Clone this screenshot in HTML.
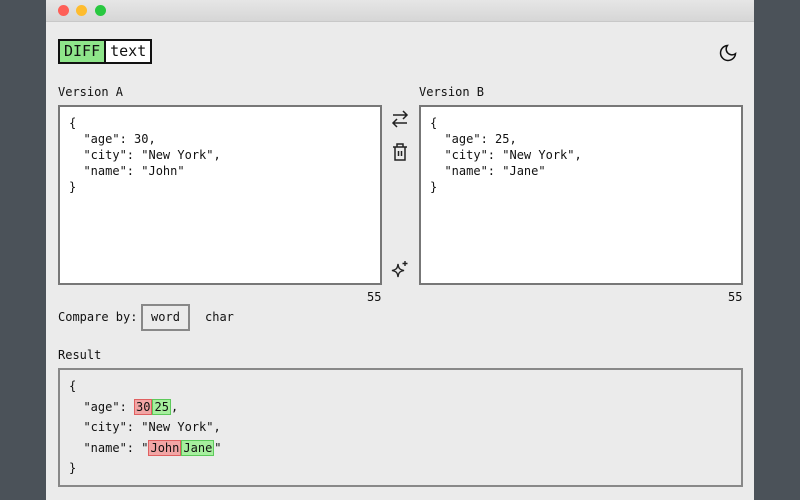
<!DOCTYPE html>
<html><head><style>
*{box-sizing:border-box;margin:0;padding:0}
body{width:800px;height:500px;background:#4b5259;font-family:"DejaVu Sans Mono","Liberation Mono",monospace;font-size:12px;color:#111;position:relative;overflow:hidden}
.win{position:absolute;left:46px;top:0;width:708px;height:500px;background:#ebebeb}
.tb{height:22px;background:linear-gradient(#e6e6e6,#d6d6d6);border-bottom:1px solid #c8c8c8;position:relative}
.dot{position:absolute;top:5px;width:11px;height:11px;border-radius:50%}
.a{position:absolute}
.logo{left:12px;top:39px;height:25px;border:2px solid #111;display:flex;font-size:15px;line-height:21px}
.logo span{padding:0 4px}
.ta{background:#fff;border:2px solid #777;width:324px;height:180px;top:105px;padding:8px 9px;white-space:pre;line-height:16px}
.res{left:12px;top:368px;width:685px;height:119px;border:2px solid #888;background:#ebebeb;padding:6px 9px;white-space:pre;line-height:20.5px}
.d{background:#f2a5a5;border:1px solid #e06060;padding:0 1px}
.i{background:#a6ef9e;border:1px solid #5cc95a;padding:0 1px}
</style></head><body>
<div class="win">
<div class="tb"><div class="dot" style="left:12px;background:#fe5f57"></div><div class="dot" style="left:30px;background:#febc2e"></div><div class="dot" style="left:49px;background:#28c840"></div></div>
<div class="a logo"><span style="background:#8ee58a;border-right:2px solid #111">DIFF</span><span style="background:#fff">text</span></div>
<svg class="a" style="left:672px;top:43px" width="20" height="20" viewBox="0 0 24 24" fill="none" stroke="#111" stroke-width="1.8"><path d="M21 12.8A9 9 0 1 1 11.2 3a7 7 0 0 0 9.8 9.8z"/></svg>
<div class="a" style="left:12px;top:85px">Version A</div>
<div class="a" style="left:373px;top:85px">Version B</div>
<div class="a ta" style="left:12px">{
  "age": 30,
  "city": "New York",
  "name": "John"
}</div>
<div class="a ta" style="left:373px">{
  "age": 25,
  "city": "New York",
  "name": "Jane"
}</div>
<svg class="a" style="left:344px;top:110px" width="20" height="18" viewBox="0 0 20 18" fill="none" stroke="#222" stroke-width="1.5"><path d="M3 5h14M13 1l4 4-4 4M17 13H3M7 9l-4 4 4 4"/></svg>
<svg class="a" style="left:345px;top:142px" width="18" height="20" viewBox="0 0 18 20" fill="none" stroke="#222" stroke-width="1.5"><path d="M2 5h14M6 5V2h6v3M4 5v13h10V5M7.5 9v5M10.5 9v5"/></svg>
<svg class="a" style="left:343px;top:259px" width="22" height="22" viewBox="0 0 22 22" fill="none" stroke="#222" stroke-width="1.4"><path d="M9 5C9.6 9.5 10.5 10.5 15 11.5C10.5 12.5 9.6 13.5 9 18C8.4 13.5 7.5 12.5 3 11.5C7.5 10.5 8.4 9.5 9 5z"/><path d="M16 2v5M13.5 4.5h5"/></svg>
<div class="a" style="left:321px;top:290px">55</div>
<div class="a" style="left:682px;top:290px">55</div>
<div class="a" style="left:12px;top:310px">Compare by:</div>
<div class="a" style="left:95px;top:304px;width:49px;height:27px;border:2px solid #888;text-align:center;line-height:23px">word</div>
<div class="a" style="left:159px;top:310px">char</div>
<div class="a" style="left:12px;top:348px">Result</div>
<div class="a res">{
  "age": <span class="d">30</span><span class="i">25</span>,
  "city": "New York",
  "name": "<span class="d">John</span><span class="i">Jane</span>"
}</div>
</div>
</body></html>
